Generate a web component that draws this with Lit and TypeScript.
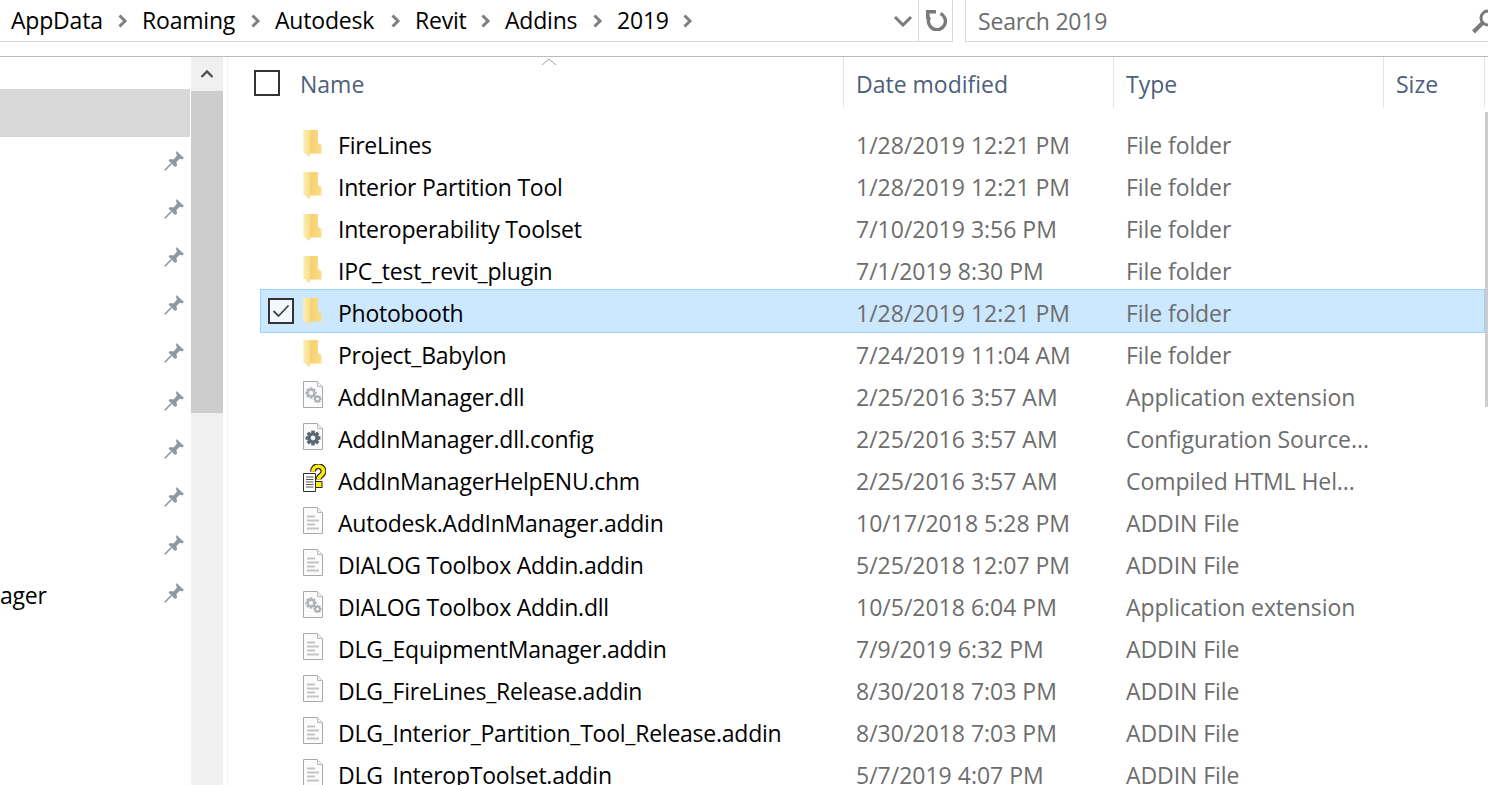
import { LitElement, html, css, svg } from "lit";
import { customElement } from "lit/decorators.js";

type Kind = "folder" | "dll" | "config" | "chm" | "file";
interface Row { name: string; date: string; type: string; kind: Kind; sel?: boolean }

const rows: Row[] = [
  { name: "FireLines", date: "1/28/2019 12:21 PM", type: "File folder", kind: "folder" },
  { name: "Interior Partition Tool", date: "1/28/2019 12:21 PM", type: "File folder", kind: "folder" },
  { name: "Interoperability Toolset", date: "7/10/2019 3:56 PM", type: "File folder", kind: "folder" },
  { name: "IPC_test_revit_plugin", date: "7/1/2019 8:30 PM", type: "File folder", kind: "folder" },
  { name: "Photobooth", date: "1/28/2019 12:21 PM", type: "File folder", kind: "folder", sel: true },
  { name: "Project_Babylon", date: "7/24/2019 11:04 AM", type: "File folder", kind: "folder" },
  { name: "AddInManager.dll", date: "2/25/2016 3:57 AM", type: "Application extension", kind: "dll" },
  { name: "AddInManager.dll.config", date: "2/25/2016 3:57 AM", type: "Configuration Source...", kind: "config" },
  { name: "AddInManagerHelpENU.chm", date: "2/25/2016 3:57 AM", type: "Compiled HTML Hel...", kind: "chm" },
  { name: "Autodesk.AddInManager.addin", date: "10/17/2018 5:28 PM", type: "ADDIN File", kind: "file" },
  { name: "DIALOG Toolbox Addin.addin", date: "5/25/2018 12:07 PM", type: "ADDIN File", kind: "file" },
  { name: "DIALOG Toolbox Addin.dll", date: "10/5/2018 6:04 PM", type: "Application extension", kind: "dll" },
  { name: "DLG_EquipmentManager.addin", date: "7/9/2019 6:32 PM", type: "ADDIN File", kind: "file" },
  { name: "DLG_FireLines_Release.addin", date: "8/30/2018 7:03 PM", type: "ADDIN File", kind: "file" },
  { name: "DLG_Interior_Partition_Tool_Release.addin", date: "8/30/2018 7:03 PM", type: "ADDIN File", kind: "file" },
  { name: "DLG_InteropToolset.addin", date: "5/7/2019 4:07 PM", type: "ADDIN File", kind: "file" },
];

const crumbs: [string, number][] = [
  ["AppData", 131], ["Roaming", 133], ["Autodesk", 140], ["Revit", 90], ["Addins", 112], ["2019", 90],
];

const chevron = html`<svg class="chev" viewBox="0 0 11 14" width="11" height="14"><path d="M2.500 1.500L8 7l-5.500 5.500" fill="none" stroke="#7f7f7f" stroke-width="3"/></svg>`;

const pin = html`<svg class="pin" viewBox="0 0 20 20" width="20" height="20"><path d="M12.500 0L20 7l-2 1.500-2-1-3.500 3.500.5 4-2 1L4.500 9.500 6 8l3.500.5L13 4.500 12 2z" fill="#8d99a3"/><path d="M7.500 12.500L.8 19.200" stroke="#8d99a3" stroke-width="1.600"/></svg>`;

const sheet = svg`<path d="M.5 .5h14l5 5v21H.5z" fill="#fbfbfb" stroke="#a5a9ae"/><path d="M14.500 .5v5h5" fill="#f0f0f0" stroke="#b8bbbf"/>`;

function gearShape(cx: number, cy: number, r: number, fill: string, hole = 0.5) {
  const teeth = [0, 45, 90, 135].map(a => svg`<rect x="${cx - r * 0.3}" y="${cy - r * 1.28}" width="${r * 0.6}" height="${r * 2.56}" fill="${fill}" transform="rotate(${a} ${cx} ${cy})"/>`);
  return svg`${teeth}<circle cx="${cx}" cy="${cy}" r="${r}" fill="${fill}"/><circle cx="${cx}" cy="${cy}" r="${r * hole}" fill="#f6f6f6"/>`;
}

function icon(k: Kind) {
  if (k === "folder") {
    return html`<svg viewBox="0 0 19 27" width="19" height="27"><defs><linearGradient id="f" x1="0" x2="1" y1="0" y2="0"><stop offset="0" stop-color="#fdeeb0"/><stop offset="1" stop-color="#f8dc8a"/></linearGradient><linearGradient id="b" x1="0" x2="1" y1="0" y2="0"><stop offset="0" stop-color="#f4cc68"/><stop offset="1" stop-color="#fbdc86"/></linearGradient></defs><path d="M3 0H15V13L18.500 15V23.500H6z" fill="url(#b)"/><path d="M.3 0H7.500V3L7 25.500 6.200 27 .3 22z" fill="url(#f)"/></svg>`;
  }
  if (k === "dll") {
    return html`<svg viewBox="0 0 20 27" width="20" height="27">${sheet}${gearShape(8, 12, 4.4, "#b0b5ba")}${gearShape(14.5, 18, 3.1, "#a6acb2")}</svg>`;
  }
  if (k === "config") {
    return html`<svg viewBox="0 0 20 27" width="20" height="27">${sheet}${gearShape(10, 15, 5.8, "#5a6872", 0.42)}</svg>`;
  }
  if (k === "chm") {
    return html`<svg viewBox="0 0 23 28" width="23" height="28"><path d="M.5 9.500h12v18H.5z" fill="#fff" stroke="#2b2b2b"/><path d="M3 13h7.500M3 15.500h7.500M3 18h7.500M3 20.500h7.500M3 23h7.500" stroke="#555"/><path d="M10 7.500c0-7 10.500-7 10.500 0 0 4.500-5 3.500-5 8" fill="none" stroke="#2b2b2b" stroke-width="6"/><path d="M10 7.500c0-7 10.500-7 10.500 0 0 4.500-5 3.500-5 8" fill="none" stroke="#ffee00" stroke-width="3.600"/><rect x="12.500" y="17.500" width="6.500" height="6" fill="#ffee00" stroke="#2b2b2b"/></svg>`;
  }
  return html`<svg viewBox="0 0 20 27" width="20" height="27">${sheet}<path d="M4 9.500h8M4 13.500h12M4 17.500h8M4 21.500h12" stroke="#c3c6c9" stroke-width="1.800"/></svg>`;
}

@customElement("app-root")
export class AppRoot extends LitElement {
  static styles = css`
    :host { display: block; width: 1488px; height: 785px; overflow: hidden; background: #fff;
      font-family: "Open Sans", "Noto Sans", sans-serif; font-size: 23px; color: #000; }
    .top { display: flex; height: 42px; }
    .crumbbar { width: 953px; display: flex; align-items: center; border-bottom: 1px solid #d9d9d9; border-right: 1px solid #d9d9d9; box-sizing: border-box; padding-left: 11px; }
    .crumb { display: flex; align-items: center; height: 41px; line-height: 41px; white-space: nowrap; }
    .crumb .t { flex: 1; letter-spacing: -.2px; }
    .chev { margin-right: 14px; }
    .fill { flex: 1; }
    .dd { width: 33px; height: 41px; display: flex; align-items: center; justify-content: center; border-right: 1px solid #d9d9d9; box-sizing: border-box; padding-left: 2px; }
    .refresh { width: 33px; height: 41px; display: flex; align-items: center; justify-content: center; padding-left: 2px; box-sizing: border-box; }
    .gap { width: 12px; }
    .search { flex: 1; border-left: 1px solid #d9d9d9; border-bottom: 1px solid #d9d9d9; box-sizing: border-box; display: flex; align-items: center; padding-left: 12px; color: #6d6d6d; letter-spacing: -.2px; overflow: hidden; justify-content: space-between; }
    .search svg { flex: none; margin-right: -10px; }
    .spacer { height: 14px; border-bottom: 1px solid #bcbcbc; }
    .body { display: flex; height: 728px; }
    .nav { width: 190px; padding-top: 32px; flex: none; }
    .nitem { height: 48px; display: flex; align-items: center; justify-content: space-between; box-sizing: border-box; padding-right: 6px; letter-spacing: -.2px; }
    .nitem.cur { background: #d9d9d9; }
    .nitem .lbl { padding-top: 3px; }
    .pin { flex: none; }
    .sb { width: 32px; flex: none; margin-left: 1px; background: #f0f0f0; display: flex; flex-direction: column; }
    .sb .up { height: 34px; display: flex; align-items: center; justify-content: center; }
    .sb .thumb { height: 322px; background: #cdcdcd; }
    .split { width: 4px; flex: none; }
    .split2 { width: 1px; flex: none; background: #f3f3f3; }
    .main { flex: 1; min-width: 0; display: flex; }
    .content { flex: 1; min-width: 0; }
    .vs { width: 3px; margin-top: 55px; height: 295px; background: #cdcdcd; flex: none; }
    .head { height: 51px; display: grid; grid-template-columns: 616px 270px 270px 1fr; color: #4c607a; position: relative; }
    .hc { box-sizing: border-box; border-right: 1px solid #e5e5e5; display: flex; align-items: center; padding-left: 12px; padding-top: 3px; }
    .hc:last-child { border-right: 0; }
    .hc.name { padding-left: 0; padding-top: 3px; }
    .hcheck { width: 26px; height: 26px; border: 2px solid #333; box-sizing: border-box; margin: -3px 20px 0 26px; flex: none; }
    .sort { position: absolute; left: 313px; top: 1px; }
    .rows { margin-top: 15px; margin-left: 32px; }
    .row { height: 42px; display: grid; grid-template-columns: 38px 40px 518px 270px 1fr; align-items: center; box-sizing: border-box; white-space: nowrap; position: relative; }
    .row > * { position: relative; }
    .row.sel::before { content: ""; position: absolute; left: 0; right: 0; top: -2px; bottom: 0; background: #cce8ff; border: 1px solid #99d1ff; box-sizing: border-box; }
    .cb { width: 26px; height: 26px; border: 2px solid #333; box-sizing: border-box; margin: 0 0 3px 8px; display: flex; align-items: center; justify-content: center; background: #f2f8fd; }
    .ic { display: flex; align-items: center; margin-left: 5px; height: 42px; box-sizing: border-box; padding-bottom: 4px; }
    .ic.folder { padding-bottom: 1px; }
    .n, .d, .ty { padding-top: 2px; }
    .n { letter-spacing: -.24px; }
    .d { color: #6d6d6d; }
    .ty { color: #6d6d6d; letter-spacing: -.08px; }
  `;

  render() {
    return html`
      <div class="top">
        <div class="crumbbar">
          ${crumbs.map(([t, w]) => html`<div class="crumb" style="width:${w}px"><span class="t">${t}</span>${chevron}</div>`)}
          <div class="fill"></div>
          <div class="dd"><svg viewBox="0 0 20 12" width="20" height="12"><path d="M2 2l8 8 8-8" fill="none" stroke="#7a7a7a" stroke-width="3"/></svg></div>
          <div class="refresh"><svg viewBox="0 0 21 21" width="21" height="21"><path d="M14.500 3.500A8.500 8.500 0 1 1 3.500 7" fill="none" stroke="#7a7a7a" stroke-width="3.400"/><path d="M0 0H10V3.600H3.600V9H0z" fill="#7a7a7a"/></svg></div>
        </div>
        <div class="gap"></div>
        <div class="search"><span>Search 2019</span>
          <svg viewBox="0 0 28 28" width="28" height="28"><circle cx="18" cy="11" r="7" fill="none" stroke="#7a7a7a" stroke-width="3"/><path d="M12.500 16L3.500 25" stroke="#7a7a7a" stroke-width="4"/></svg>
        </div>
      </div>
      <div class="spacer"></div>
      <div class="body">
        <div class="nav">
          <div class="nitem cur"></div>
          ${[0,1,2,3,4,5,6,7,8].map(() => html`<div class="nitem"><span></span>${pin}</div>`)}
          <div class="nitem"><span class="lbl">ager</span>${pin}</div>
        </div>
        <div class="sb">
          <div class="up"><svg viewBox="0 0 14 10" width="14" height="10"><path d="M1.500 8L7 2.500 12.500 8" fill="none" stroke="#505050" stroke-width="2.400"/></svg></div>
          <div class="thumb"></div>
        </div>
        <div class="split"></div>
        <div class="split2"></div>
        <div class="main">
          <div class="content">
            <div class="head">
              <div class="hc name"><span class="hcheck"></span><span>Name</span></div>
              <div class="hc">Date modified</div>
              <div class="hc">Type</div>
              <div class="hc">Size</div>
              <svg class="sort" viewBox="0 0 16 8" width="16" height="8"><path d="M1 7l7-6 7 6" fill="none" stroke="#a0a0a0"/></svg>
            </div>
            <div class="rows">
              ${rows.map(r => html`
                <div class="row ${r.sel ? "sel" : ""}">
                  <div>${r.sel ? html`<div class="cb"><svg viewBox="0 0 18 14" width="18" height="14"><path d="M1.500 7l5 5L16.500 1.500" fill="none" stroke="#444" stroke-width="1.800"/></svg></div>` : ""}</div>
                  <div class="ic ${r.kind}">${icon(r.kind)}</div>
                  <div class="n">${r.name}</div>
                  <div class="d">${r.date}</div>
                  <div class="ty">${r.type}</div>
                </div>`)}
            </div>
          </div>
          <div class="vs"></div>
        </div>
      </div>
    `;
  }
}
